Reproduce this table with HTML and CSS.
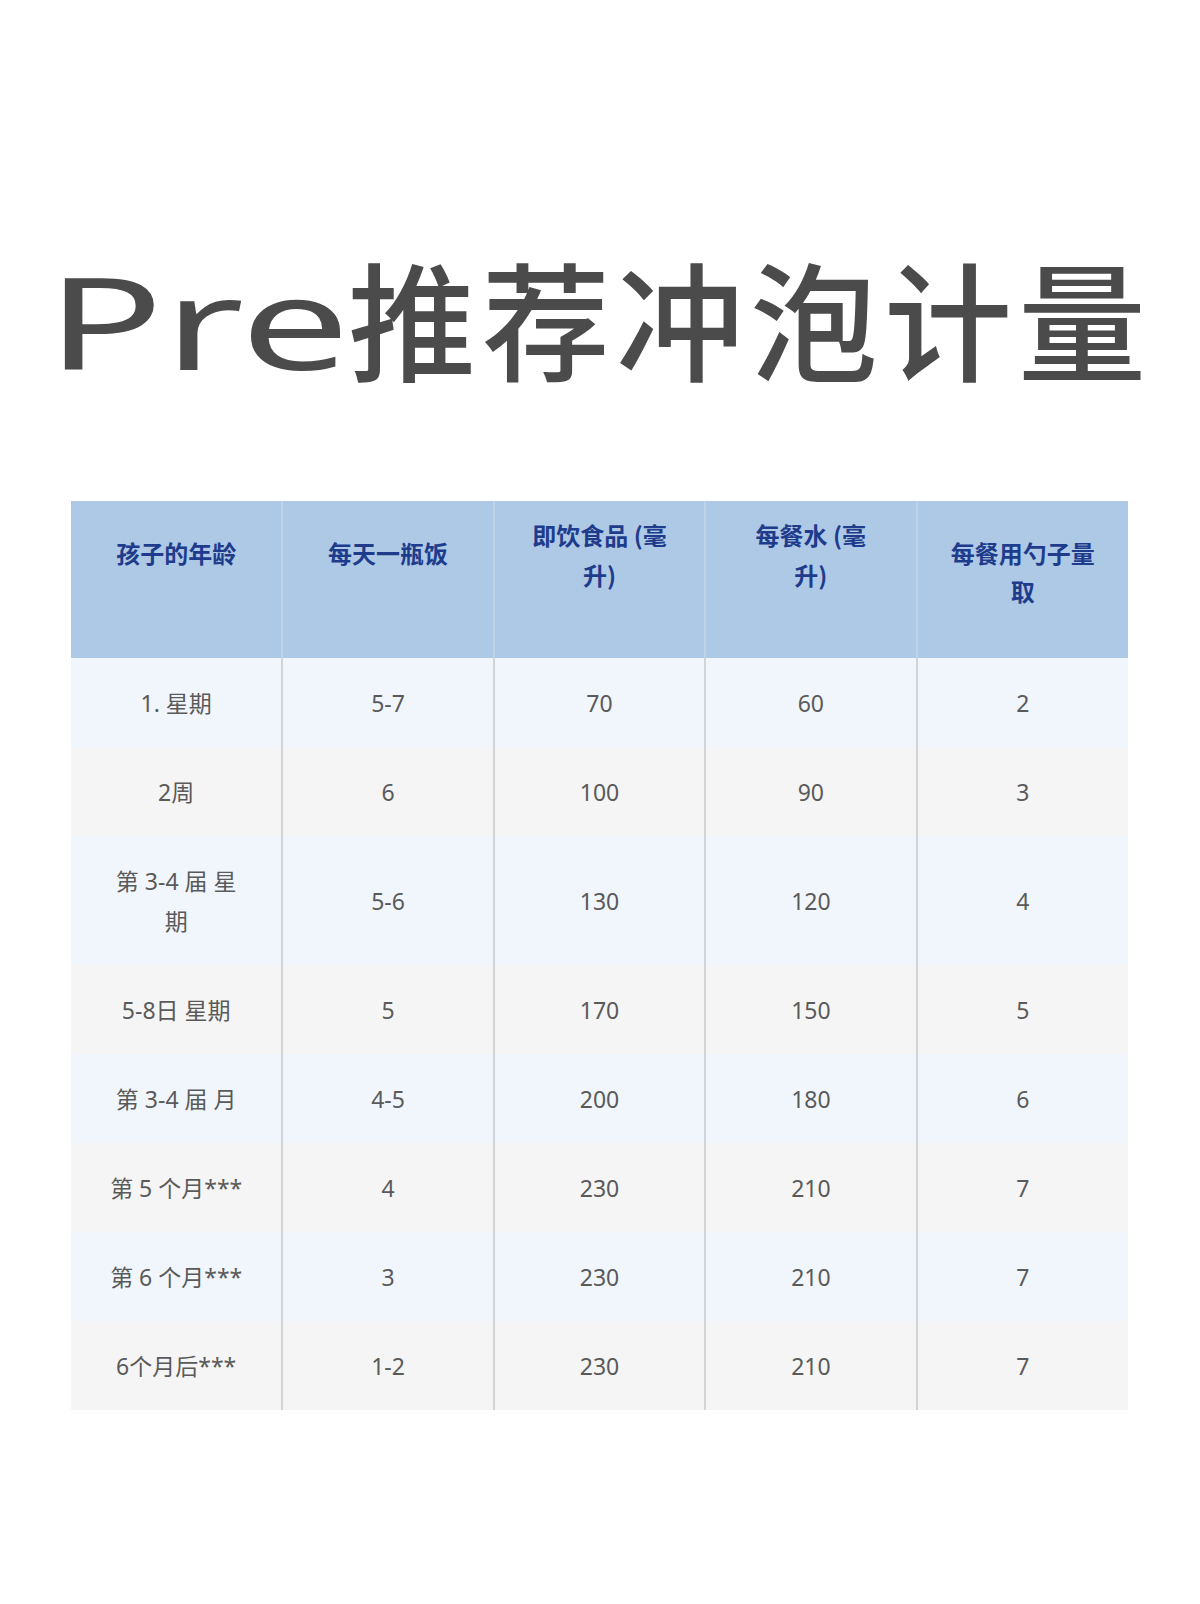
FILE: index.html
```html
<!DOCTYPE html>
<html lang="zh-CN">
<head>
<meta charset="utf-8">
<title>Pre推荐冲泡计量</title>
<link rel="stylesheet" href="styles.css">
</head>
<body>
<div class="page">
  <h1 class="title"><span class="title-latin"><span class="title-latin-inner">Pre</span></span>推荐冲泡计量</h1>
  <div class="table-wrap">
    <table class="feed">
      <thead>
        <tr>
          <th>孩子的年龄</th>
          <th>每天一瓶饭</th>
          <th class="th-high">即饮食品 (毫<br>升)</th>
          <th class="th-high">每餐水 (毫<br>升)</th>
          <th>每餐用勺子量<br>取</th>
        </tr>
      </thead>
      <tbody>
        <tr class="blue"><td>1. 星期</td><td>5-7</td><td>70</td><td>60</td><td>2</td></tr>
        <tr class="gray"><td>2周</td><td>6</td><td>100</td><td>90</td><td>3</td></tr>
        <tr class="blue"><td>第 3-4 届 星<br>期</td><td>5-6</td><td>130</td><td>120</td><td>4</td></tr>
        <tr class="gray"><td>5-8日 星期</td><td>5</td><td>170</td><td>150</td><td>5</td></tr>
        <tr class="blue"><td>第 3-4 届 月</td><td>4-5</td><td>200</td><td>180</td><td>6</td></tr>
        <tr class="gray"><td>第 5 个月***</td><td>4</td><td>230</td><td>210</td><td>7</td></tr>
        <tr class="blue"><td>第 6 个月***</td><td>3</td><td>230</td><td>210</td><td>7</td></tr>
        <tr class="gray"><td>6个月后***</td><td>1-2</td><td>230</td><td>210</td><td>7</td></tr>
      </tbody>
    </table>
  </div>
</div>
</body>
</html>
```

FILE: styles.css
```css
html, body {
  margin: 0;
  padding: 0;
  background: #ffffff;
}

.page {
  width: 1200px;
  height: 1604px;
  padding-top: 250px;
  box-sizing: border-box;
}

.title {
  margin: 0 0 117px 0;
  padding-left: 46px;
  height: 134px;
  font-family: "Noto Sans CJK SC", "Noto Sans", sans-serif;
  font-size: 128px;
  line-height: 134px;
  letter-spacing: 6px;
  font-weight: 500;
  color: #4b4b4b;
  white-space: nowrap;
}

.title-latin {
  display: inline-block;
  width: 302px;
  vertical-align: 2px;
  font-family: "Noto Sans", sans-serif;
  font-size: 128px;
  font-weight: 400;
  line-height: 134px;
  letter-spacing: 0;
}

.title-latin-inner {
  display: inline-block;
  transform: scaleX(1.52);
  transform-origin: 0 100%;
}

.table-wrap {
  padding-left: 71px;
}

.feed {
  width: 1057px;
  table-layout: fixed;
  border-collapse: collapse;
  border-spacing: 0;
  font-family: "Noto Sans", "Noto Sans CJK SC", sans-serif;
}

.feed th {
  height: 157px;
  box-sizing: border-box;
  padding: 33px 20px 0 20px;
  vertical-align: top;
  background: #adc9e6;
  color: #1f3c8c;
  font-family: "Noto Sans CJK SC", sans-serif;
  font-size: 24px;
  line-height: 38px;
  font-weight: 700;
  text-align: center;
  border-left: 2px solid #c0d3e6;
}

.feed th.th-high {
  padding-top: 14px;
  line-height: 40px;
}

.feed td {
  padding: 24.5px 20px;
  text-align: center;
  vertical-align: middle;
  font-size: 23px;
  line-height: 40px;
  color: #5a5a5a;
  border-left: 2px solid #d2d5d8;
}

.feed th:first-child,
.feed td:first-child {
  border-left: none;
}

.feed tr.blue td {
  background: #f1f6fc;
}

.feed tr.gray td {
  background: #f5f5f5;
}
```
